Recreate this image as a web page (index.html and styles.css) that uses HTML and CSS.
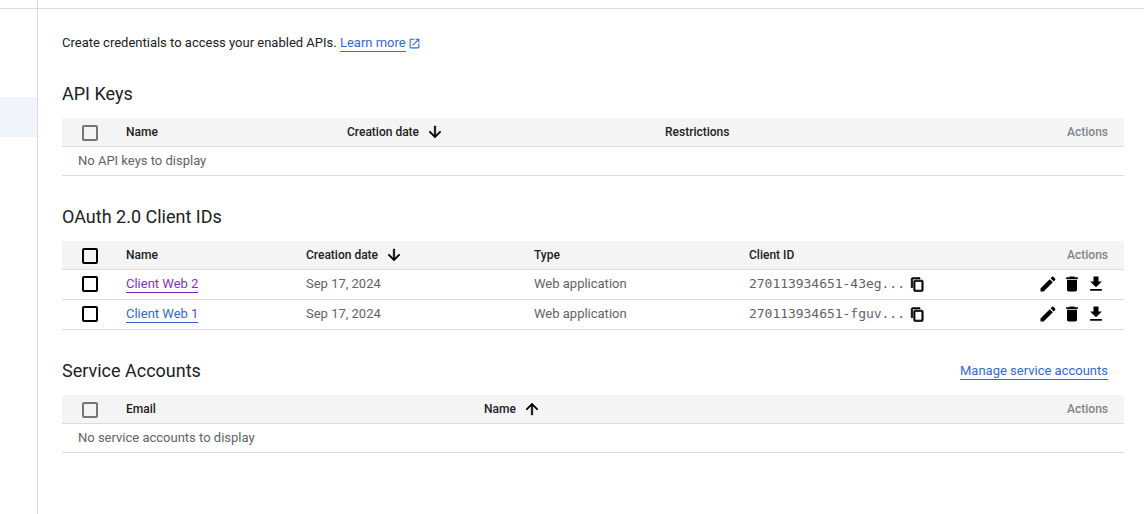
FILE: index.html
```html
<!DOCTYPE html>
<html lang="en">
<head>
<meta charset="utf-8">
<title>Credentials</title>
<link rel="stylesheet" href="styles.css">
</head>
<body>
<div class="shell">
  <aside class="side">
    <div class="topstrip"></div>
    <div class="side-active"></div>
  </aside>
  <div class="content">
    <div class="topstrip"></div>
    <main class="main">
      <p class="intro">Create credentials to access your enabled APIs. <a class="link" href="#">Learn more</a><svg class="ext" viewBox="0 0 24 24"><path d="M19 19H5V5h7V3H5c-1.11 0-2 .9-2 2v14c0 1.1.89 2 2 2h14c1.1 0 2-.9 2-2v-7h-2v7zM14 3v2h3.59l-9.83 9.83 1.41 1.41L19 6.41V10h2V3h-7z"/></svg></p>

      <section class="section first">
        <div class="sec-head"><h2>API Keys</h2></div>
        <div class="row head cols-api">
          <span class="cbcell"><span class="cb muted"></span></span>
          <span>Name</span>
          <span class="sort">Creation date<svg class="arrow" viewBox="0 0 24 24"><path d="M20 12l-1.41-1.41L13 16.17V4h-2v12.17l-5.58-5.59L4 12l8 8 8-8z"/></svg></span>
          <span>Restrictions</span>
          <span class="actions-label">Actions</span>
        </div>
        <div class="empty">No API keys to display</div>
      </section>

      <section class="section">
        <div class="sec-head"><h2>OAuth 2.0 Client IDs</h2></div>
        <div class="row head cols-oauth">
          <span class="cbcell"><span class="cb"></span></span>
          <span>Name</span>
          <span class="sort">Creation date<svg class="arrow" viewBox="0 0 24 24"><path d="M20 12l-1.41-1.41L13 16.17V4h-2v12.17l-5.58-5.59L4 12l8 8 8-8z"/></svg></span>
          <span>Type</span>
          <span>Client ID</span>
          <span class="actions-label">Actions</span>
        </div>
        <div class="row body cols-oauth">
          <span class="cbcell"><span class="cb"></span></span>
          <span><a class="link visited" href="#">Client Web 2</a></span>
          <span class="txt">Sep 17, 2024</span>
          <span class="txt">Web application</span>
          <span class="cid"><code class="txt">270113934651-43eg...</code><svg class="copy" viewBox="0 0 24 24"><path d="M16 1H4c-1.1 0-2 .9-2 2v14h2V3h12V1zm3 4H8c-1.1 0-2 .9-2 2v14c0 1.1.9 2 2 2h11c1.1 0 2-.9 2-2V7c0-1.1-.9-2-2-2zm0 16H8V7h11v14z"/></svg></span>
          <span class="icons">
            <svg class="act" viewBox="0 0 24 24"><path d="M3 17.25V21h3.75L17.81 9.94l-3.75-3.75L3 17.25zM20.71 7.04c.39-.39.39-1.02 0-1.41l-2.34-2.34c-.39-.39-1.02-.39-1.41 0l-1.83 1.83 3.75 3.75 1.83-1.83z"/></svg>
            <svg class="act" viewBox="0 0 24 24"><path d="M6 19c0 1.1.9 2 2 2h8c1.1 0 2-.9 2-2V7H6v12zM19 4h-3.5l-1-1h-5l-1 1H5v2h14V4z"/></svg>
            <svg class="act" viewBox="0 0 24 24"><path d="M19 9h-4V3H9v6H5l7 7 7-7zM5 18v2h14v-2H5z"/></svg>
          </span>
        </div>
        <div class="row body cols-oauth">
          <span class="cbcell"><span class="cb"></span></span>
          <span><a class="link" href="#">Client Web 1</a></span>
          <span class="txt">Sep 17, 2024</span>
          <span class="txt">Web application</span>
          <span class="cid"><code class="txt">270113934651-fguv...</code><svg class="copy" viewBox="0 0 24 24"><path d="M16 1H4c-1.1 0-2 .9-2 2v14h2V3h12V1zm3 4H8c-1.1 0-2 .9-2 2v14c0 1.1.9 2 2 2h11c1.1 0 2-.9 2-2V7c0-1.1-.9-2-2-2zm0 16H8V7h11v14z"/></svg></span>
          <span class="icons">
            <svg class="act" viewBox="0 0 24 24"><path d="M3 17.25V21h3.75L17.81 9.94l-3.75-3.75L3 17.25zM20.71 7.04c.39-.39.39-1.02 0-1.41l-2.34-2.34c-.39-.39-1.02-.39-1.41 0l-1.83 1.83 3.75 3.75 1.83-1.83z"/></svg>
            <svg class="act" viewBox="0 0 24 24"><path d="M6 19c0 1.1.9 2 2 2h8c1.1 0 2-.9 2-2V7H6v12zM19 4h-3.5l-1-1h-5l-1 1H5v2h14V4z"/></svg>
            <svg class="act" viewBox="0 0 24 24"><path d="M19 9h-4V3H9v6H5l7 7 7-7zM5 18v2h14v-2H5z"/></svg>
          </span>
        </div>
      </section>

      <section class="section">
        <div class="sec-head"><h2>Service Accounts</h2><a class="link" href="#">Manage service accounts</a></div>
        <div class="row head cols-sa">
          <span class="cbcell"><span class="cb muted"></span></span>
          <span>Email</span>
          <span class="sort">Name<svg class="arrow up" viewBox="0 0 24 24"><path d="M20 12l-1.41-1.41L13 16.17V4h-2v12.17l-5.58-5.59L4 12l8 8 8-8z"/></svg></span>
          <span class="actions-label">Actions</span>
        </div>
        <div class="empty">No service accounts to display</div>
      </section>
    </main>
  </div>
</div>
</body>
</html>
```

FILE: styles.css
```css
* { box-sizing: border-box; }
html, body { margin: 0; height: 100%; overflow: hidden; }
body {
  font-family: Roboto, "Liberation Sans", sans-serif;
  font-size: 13px;
  color: #202124;
  background: #fff;
}
.shell { display: flex; height: 514px; }
.side { width: 38px; flex: none; border-right: 1px solid #dadce0; }
.topstrip { height: 9px; border-bottom: 1px solid #dadce0; }
.side-active { height: 40px; margin-top: 88px; background: #eff4fd; }
.content { flex: 1; min-width: 0; }
.main { padding: 24px 20px 0 24px; }
.intro { margin: 0; height: 20px; line-height: 20px; display: flex; align-items: center; white-space: pre; }
.link { color: #3367d6; text-decoration: none; border-bottom: 1px solid #3367d6; line-height: 16px; display: inline-block; }
.link.visited { color: #8430ce; border-bottom-color: #7b1fa2; }
.ext { width: 13px; height: 13px; margin-left: 2px; fill: #3367d6; }
.section { margin-top: 27px; }
.sec-head { height: 28px; margin-bottom: 10px; padding-right: 16px; display: flex; align-items: center; justify-content: space-between; }
h2 { margin: 0; font-size: 18px; font-weight: 400; line-height: 28px; color: #202124; }
.row { display: grid; align-items: center; border-bottom: 1px solid #dadce0; }
.head { height: 29px; background: #f4f4f4; font-size: 12px; font-weight: 500; color: #202124; }
.body { height: 30px; padding-bottom: 1px; color: #5f6368; }
.txt { line-height: 16px; padding-bottom: 1px; }
.cols-api { grid-template-columns: 64px 221px 318px 1fr 100px; }
.cols-oauth { grid-template-columns: 64px 180px 228px 215px 1fr 100px; }
.cols-sa { grid-template-columns: 64px 358px 1fr 100px; }
.cbcell { display: flex; padding-left: 20px; }
.head .cbcell { padding-top: 2px; }
.cb { width: 16px; height: 16px; border: 2px solid #000; border-radius: 2px; display: block; }
.cb.muted { border-color: #757575; }
.sort { display: flex; align-items: center; }
.arrow { width: 18px; height: 18px; margin-left: 7px; fill: #000; stroke: #000; stroke-width: 0.7; }
.arrow.up { transform: rotate(180deg); }
.actions-label { text-align: right; padding-right: 16px; color: #80868b; }
.cid { display: flex; align-items: center; }
code { font-family: "DejaVu Sans Mono", monospace; font-size: 13px; letter-spacing: -0.03px; }
.copy { width: 15px; height: 15px; margin-left: 5px; fill: #000; stroke: #000; stroke-width: 1.2; }
.icons { display: flex; justify-content: flex-end; gap: 4px; padding-right: 18px; }
.act { width: 20px; height: 20px; fill: #000; }
.empty { height: 29px; line-height: 28px; padding-left: 16px; color: #5f6368; border-bottom: 1px solid #dadce0; }
```
